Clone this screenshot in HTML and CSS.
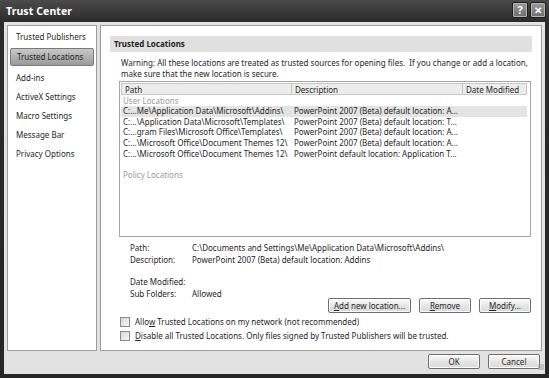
FILE: index.html
```html
<!DOCTYPE html>
<html lang="en">
<head>
    <meta charset="UTF-8">
    <title>Trust Center</title>
    <link rel="stylesheet" href="styles.css">
</head>
<body>
    <div class="window">
        <div class="titlebar">
            <span class="title">Trust Center</span>
            <div class="caption-buttons">
                <span class="cap-btn">?</span>
                <span class="cap-btn close">&#x2715;</span>
            </div>
        </div>

        <div class="client">
            <div class="panes">
                <ul class="sidebar">
                    <li>Trusted Publishers</li>
                    <li class="active">Trusted Locations</li>
                    <li>Add-ins</li>
                    <li>ActiveX Settings</li>
                    <li>Macro Settings</li>
                    <li>Message Bar</li>
                    <li>Privacy Options</li>
                </ul>

                <div class="main">
                    <div class="section-head">Trusted Locations</div>
                    <div class="content">
                        <p class="warning">Warning: All these locations are treated as trusted sources for opening files.&nbsp; If you change or add a location, make sure that the new location is secure.</p>

                        <div class="listbox">
                            <div class="list-head">
                                <span class="col-path">Path</span>
                                <span class="col-desc">Description</span>
                                <span class="col-date">Date Modified</span>
                            </div>
                            <div class="group">User Locations</div>
                            <div class="row selected">
                                <span class="col-path">C:...Me\Application Data\Microsoft\Addins\</span>
                                <span class="col-desc">PowerPoint 2007 (Beta) default location: A...</span>
                            </div>
                            <div class="row">
                                <span class="col-path">C:...\Application Data\Microsoft\Templates\</span>
                                <span class="col-desc">PowerPoint 2007 (Beta) default location: T...</span>
                            </div>
                            <div class="row">
                                <span class="col-path">C:...gram Files\Microsoft Office\Templates\</span>
                                <span class="col-desc">PowerPoint 2007 (Beta) default location: A...</span>
                            </div>
                            <div class="row">
                                <span class="col-path">C:...\Microsoft Office\Document Themes 12\</span>
                                <span class="col-desc">PowerPoint 2007 (Beta) default location: A...</span>
                            </div>
                            <div class="row">
                                <span class="col-path">C:...\Microsoft Office\Document Themes 12\</span>
                                <span class="col-desc">PowerPoint default location: Application T...</span>
                            </div>
                            <div class="group policy">Policy Locations</div>
                        </div>

                        <div class="details">
                            <span class="label">Path:</span>
                            <span>C:\Documents and Settings\Me\Application Data\Microsoft\Addins\</span>
                            <span class="label">Description:</span>
                            <span>PowerPoint 2007 (Beta) default location: Addins</span>
                            <span class="label spaced">Date Modified:</span>
                            <span class="spaced"></span>
                            <span class="label">Sub Folders:</span>
                            <span>Allowed</span>
                        </div>

                        <div class="actions">
                            <button class="btn wide"><u>A</u>dd new location...</button>
                            <button class="btn"><u>R</u>emove</button>
                            <button class="btn"><u>M</u>odify...</button>
                        </div>

                        <label class="check"><span class="box"></span><span>Allo<u>w</u> Trusted Locations on my network (not recommended)</span></label>
                        <label class="check"><span class="box"></span><span><u>D</u>isable all Trusted Locations. Only files signed by Trusted Publishers will be trusted.</span></label>
                    </div>
                </div>
            </div>

            <div class="footer">
                <button class="btn">OK</button>
                <button class="btn">Cancel</button>
                <span class="grip"></span>
            </div>
        </div>
    </div>
</body>
</html>
```

FILE: styles.css
```css
* {
    box-sizing: border-box;
}

body {
    margin: 0;
    font-family: "Noto Sans", "Open Sans", sans-serif;
    font-size: 8px;
    color: #262626;
    background: #1c1c1c;
}

.window {
    width: 549px;
    height: 378px;
    display: flex;
    flex-direction: column;
    background: linear-gradient(#4a4a4a, #2b2b2b 22px, #262626);
}

/* title bar */
.titlebar {
    height: 22px;
    display: flex;
    align-items: center;
    justify-content: space-between;
    padding: 0 3px 0 6px;
}

.title {
    color: #fff;
    font-weight: bold;
    font-size: 10.5px;
    letter-spacing: 0.1px;
}

.caption-buttons {
    display: flex;
    gap: 2px;
    margin-top: -2px;
}

.cap-btn {
    width: 16px;
    height: 16px;
    border: 1px solid #1e1e1e;
    border-radius: 2px;
    background: linear-gradient(#9a9a9a, #6c6c6c);
    box-shadow: inset 0 0 0 1px #b5b5b5;
    color: #fff;
    font-weight: bold;
    font-size: 11px;
    line-height: 14px;
    text-align: center;
}

.cap-btn.close {
    font-size: 10px;
}

/* client area */
.client {
    flex: 1;
    margin: 0 4px 4px 4px;
    background: #e2e2e2;
    display: flex;
    flex-direction: column;
    padding: 3px 3px 0 3px;
}

.panes {
    display: flex;
    gap: 3px;
    height: 326px;
}

.sidebar {
    width: 90px;
    margin: 0;
    padding: 2px 2px 0 2px;
    list-style: none;
    background: #fff;
    border: 1px solid #9c9c9c;
}

.sidebar li {
    height: 19.2px;
    line-height: 17px;
    padding-left: 6px;
}

.sidebar li.active {
    background: linear-gradient(#c8c8c8, #9a9a9a);
    border: 1px solid #7a7a7a;
    border-radius: 2px;
    line-height: 15px;
    height: 18px;
    margin: 1px 0 2.5px;
}

.main {
    flex: 1;
    background: #fff;
    border: 1px solid #9c9c9c;
    padding: 10px 9px 0 9px;
}

.section-head {
    height: 16px;
    line-height: 16px;
    background: #e0e0e0;
    font-weight: bold;
    padding-left: 4px;
    color: #1e1e1e;
}

.content {
    padding: 6px 1px 0 9px;
}

.warning {
    margin: 0 0 2px 2px;
    line-height: 10.5px;
}

/* list */
.listbox {
    height: 156px;
    border: 1px solid #a6a6a6;
    padding: 1px;
}

.list-head {
    display: flex;
    height: 12px;
    line-height: 11px;
    background: #ececec;
    border: 1px solid #c8c8c8;
    margin-right: 2px;
}

.list-head span {
    padding-left: 3px;
}

.list-head .col-desc,
.list-head .col-date {
    border-left: 1px solid #c4c4c4;
}

.col-path {
    width: 169px;
}

.col-desc {
    width: 171px;
}

.col-date {
    flex: 1;
}

.group {
    color: #9a9a9a;
    padding-left: 2px;
    height: 11px;
    line-height: 11px;
}

.group.policy {
    margin-top: 10px;
}

.row {
    display: flex;
    height: 10.7px;
    line-height: 10.7px;
    margin-right: 2px;
}

.row .col-path {
    padding-left: 2px;
}

.row .col-desc {
    padding-left: 4px;
}

.row.selected {
    background: #e4e4e4;
}

/* details */
.details {
    display: grid;
    grid-template-columns: 62px 1fr;
    row-gap: 1.5px;
    padding: 6px 0 0 11px;
    line-height: 10px;
}

.details .spaced {
    margin-top: 11px;
}

.actions {
    display: flex;
    justify-content: flex-end;
    gap: 8px;
    margin-top: -1px;
}

.btn {
    font-family: inherit;
    font-size: 8px;
    color: #262626;
    width: 52px;
    height: 15px;
    padding: 0;
    border: 1px solid #6e6e6e;
    border-radius: 2px;
    background: linear-gradient(#fbfbfb, #e6e6e6 50%, #d9d9d9);
    box-shadow: inset 0 0 0 1px #fff;
}

.btn.wide {
    width: 83px;
}

.check {
    display: flex;
    align-items: center;
    height: 14px;
    margin-left: 1px;
}

.check:first-of-type {
    margin-top: 2px;
}

.box {
    width: 10px;
    height: 10px;
    border: 1px solid #8a8a8a;
    background: linear-gradient(135deg, #d8d8d8, #f6f6f6);
    margin-right: 5px;
}

/* footer */
.footer {
    display: flex;
    justify-content: flex-end;
    gap: 8px;
    padding: 3px 2px 0 0;
    position: relative;
}

.grip {
    position: absolute;
    right: -2px;
    top: 13px;
    width: 6px;
    height: 6px;
    background: radial-gradient(circle, #9a9a9a 0.6px, transparent 0.8px) 0 0 / 2px 2px;
}
```
